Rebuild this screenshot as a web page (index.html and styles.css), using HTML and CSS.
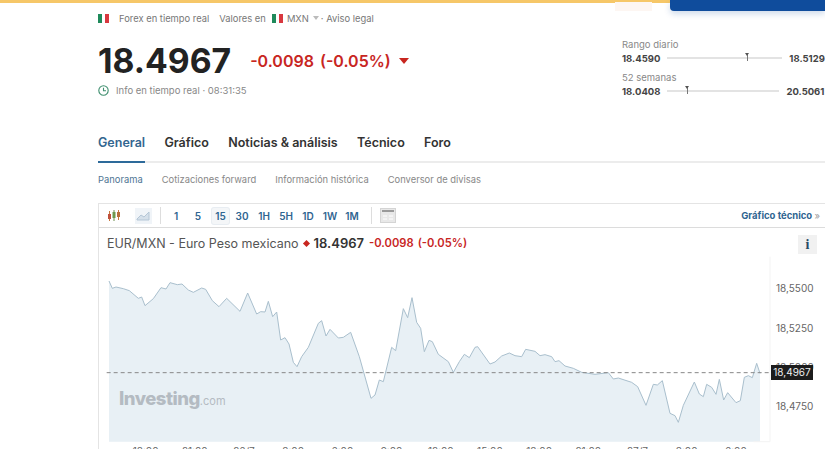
FILE: index.html
```html
<!DOCTYPE html>
<html lang="es">
<head>
    <meta charset="UTF-8">
    <meta name="viewport" content="width=device-width, initial-scale=1.0">
    <title>EUR/MXN</title>
    <link rel="stylesheet" href="styles.css">
</head>
<body>
    <div class="top-strip">
        <div class="promo-pale"></div>
        <div class="promo-blue"></div>
    </div>

    <div class="page">
        <div class="meta-row">
            <span class="flag"><i></i><i></i><i></i></span>
            <span class="meta-first">Forex en tiempo real</span>
            <span>Valores en</span>
            <span class="flag flag-second"><i></i><i></i><i></i></span>
            <span>MXN</span>
            <span class="caret-grey"></span>
            <span>· Aviso legal</span>
        </div>

        <div class="quote-row">
            <div class="quote-main">
                <div class="price-line">
                    <span class="price">18.4967</span>
                    <span class="change">-0.0098</span>
                    <span class="change">(-0.05%)</span>
                    <span class="caret-red"></span>
                </div>
                <div class="live-line">
                    <svg width="11" height="11" viewBox="0 0 11 11" fill="none" stroke="#3f8f6f" stroke-width="1.1">
                        <circle cx="5.5" cy="5.5" r="4.7"/>
                        <path d="M5.5 2.8V5.8H8"/>
                    </svg>
                    <span>Info en tiempo real · 08:31:35</span>
                </div>
            </div>
            <div class="ranges">
                <div class="range-label">Rango diario</div>
                <div class="range-line">
                    <b>18.4590</b>
                    <span class="track"><em class="marker marker-day"></em></span>
                    <b>18.5129</b>
                </div>
                <div class="range-label">52 semanas</div>
                <div class="range-line">
                    <b>18.0408</b>
                    <span class="track track-year"><em class="marker marker-year"></em></span>
                    <b>20.5061</b>
                </div>
            </div>
        </div>

        <div class="tabs">
            <a class="tab active">General</a>
            <a class="tab">Gráfico</a>
            <a class="tab">Noticias &amp; análisis</a>
            <a class="tab">Técnico</a>
            <a class="tab">Foro</a>
        </div>

        <div class="subtabs">
            <a class="active">Panorama</a>
            <a>Cotizaciones forward</a>
            <a>Información histórica</a>
            <a>Conversor de divisas</a>
        </div>

        <div class="chart-box">
            <div class="toolbar">
                <svg class="tool-candles" width="14" height="14" viewBox="0 0 14 14">
                    <path d="M2.5 2V12" stroke="#c9793f"/><rect x="1" y="5" width="3" height="5" fill="#c0503c"/>
                    <path d="M7 1V12" stroke="#6f8f4f"/><rect x="5.5" y="3" width="3" height="6" fill="#6f9a4f"/>
                    <path d="M11.5 1V11" stroke="#c9793f"/><rect x="10" y="3" width="3" height="5" fill="#b8703c"/>
                </svg>
                <span class="tool-area">
                    <svg width="15" height="11" viewBox="0 0 15 11">
                        <path d="M1 9L5 5L8 7L13 2V10H1Z" fill="#d5e0ea" stroke="#b4c6d6"/>
                    </svg>
                </span>
                <span class="tool-sep"></span>
                <div class="periods">
                    <span>1</span>
                    <span>5</span>
                    <span class="current">15</span>
                    <span>30</span>
                    <span>1H</span>
                    <span>5H</span>
                    <span>1D</span>
                    <span>1W</span>
                    <span>1M</span>
                </div>
                <span class="tool-sep tool-sep-right"></span>
                <span class="tool-calendar">
                    <svg width="16" height="15" viewBox="0 0 16 15">
                        <rect x="0.5" y="0.5" width="15" height="14" fill="#e8e8e8" stroke="#d4d4d4"/>
                        <rect x="2" y="2" width="12" height="2" fill="#9a9a9a"/>
                        <path d="M3 8H7M9 8H13M3 11H7M9 11H13" stroke="#fff"/>
                    </svg>
                </span>
                <a class="tool-link">Gráfico técnico <span>»</span></a>
            </div>

            <div class="legend">
                <span class="legend-name">EUR/MXN - Euro Peso mexicano</span>
                <span class="legend-diamond"></span>
                <b class="legend-price">18.4967</b>
                <b class="legend-change">-0.0098</b>
                <b class="legend-change">(-0.05%)</b>
            </div>
            <span class="info-btn">i</span>

            <div class="plot">
                <svg class="plot-svg" width="726" height="222" viewBox="27 -102 2178 666">
                    <path class="plot-area" d="M57 63L67 85 78 81 100 86 118 92 145 115 155 111 165 137 190 116 213 83 228 87 240 68 262 74 276 72 295 90 310 97 335 84 347 88 367 122 387 140 410 115 450 154 473 99 500 162 512 155 525 156 535 124 548 170 560 156 572 240 585 233 597 252 610 307 621 320 635 290 655 262 685 190 695 182 708 228 720 208 745 234 760 232 782 217 808 290 843 415 855 405 868 360 880 365 905 262 917 272 940 146 953 173 966 113 980 187 992 205 1003 275 1017 241 1027 245 1045 283 1075 305 1090 337 1108 305 1123 283 1138 293 1155 262 1163 260 1200 312 1215 306 1235 288 1258 279 1275 287 1295 290 1307 268 1335 274 1350 287 1365 284 1385 290 1395 305 1407 302 1425 318 1450 325 1475 337 1515 343 1555 338 1570 357 1585 354 1625 367 1643 380 1668 436 1690 373 1702 375 1717 362 1740 460 1755 467 1765 487 1780 436 1813 366 1828 402 1840 410 1850 373 1865 382 1878 403 1888 358 1901 420 1913 398 1938 428 1951 422 1963 352 1975 347 1987 353 2000 310 2010 340V545H57Z"/>
                    <path class="plot-line" d="M57 63L67 85 78 81 100 86 118 92 145 115 155 111 165 137 190 116 213 83 228 87 240 68 262 74 276 72 295 90 310 97 335 84 347 88 367 122 387 140 410 115 450 154 473 99 500 162 512 155 525 156 535 124 548 170 560 156 572 240 585 233 597 252 610 307 621 320 635 290 655 262 685 190 695 182 708 228 720 208 745 234 760 232 782 217 808 290 843 415 855 405 868 360 880 365 905 262 917 272 940 146 953 173 966 113 980 187 992 205 1003 275 1017 241 1027 245 1045 283 1075 305 1090 337 1108 305 1123 283 1138 293 1155 262 1163 260 1200 312 1215 306 1235 288 1258 279 1275 287 1295 290 1307 268 1335 274 1350 287 1365 284 1385 290 1395 305 1407 302 1425 318 1450 325 1475 337 1515 343 1555 338 1570 357 1585 354 1625 367 1643 380 1668 436 1690 373 1702 375 1717 362 1740 460 1755 467 1765 487 1780 436 1813 366 1828 402 1840 410 1850 373 1865 382 1878 403 1888 358 1901 420 1913 398 1938 428 1951 422 1963 352 1975 347 1987 353 2000 310 2010 340"/>
                    <path class="plot-edge" d="M2040 -10V545H1990"/>
                    <path class="plot-dash" d="M50 338H2040"/>
                </svg>

                <span class="watermark">Investing<small>.com</small></span>

                <span class="axis-y y-550">18,5500</span>
                <span class="axis-y y-525">18,5250</span>
                <span class="axis-y y-500">18,5000</span>
                <span class="axis-y y-475">18,4750</span>
                <span class="axis-tag">18,4967</span>

                <div class="axis-x">
                    <span>18:00</span>
                    <span>21:00</span>
                    <span>26/7</span>
                    <span>3:00</span>
                    <span>6:00</span>
                    <span>9:00</span>
                    <span>12:00</span>
                    <span>15:00</span>
                    <span>18:00</span>
                    <span>21:00</span>
                    <span>27/7</span>
                    <span>3:00</span>
                    <span>6:00</span>
                </div>
            </div>
        </div>
    </div>
</body>
</html>
```

FILE: styles.css
```css
html, body {
    margin: 0;
    height: 449px;
    overflow: hidden;
    background: #fff;
}
body {
    font-family: Inter, "Liberation Sans", sans-serif;
    color: #333;
}
a {
    text-decoration: none;
}

/* top strip */
.top-strip {
    height: 3px;
    background: #f6c768;
    display: flex;
    justify-content: flex-end;
    align-items: flex-start;
    gap: 18px;
}
.promo-pale {
    width: 37px;
    height: 9px;
    margin-top: 2px;
    background: #fdf6f2;
}
.promo-blue {
    width: 155px;
    height: 11px;
    background: #0f4c9c;
    border-bottom-left-radius: 4px;
    box-shadow: 0 3px 6px rgba(15, 76, 156, 0.2);
}

.page {
    padding-left: 98px;
}

/* meta row */
.meta-row {
    display: flex;
    align-items: center;
    height: 12px;
    margin-top: 9px;
    font-size: 9.4px;
    color: #777;
}
.meta-row span:nth-child(3) {
    margin-left: 10px;
}
.meta-first {
    margin-left: 10px;
}
.flag {
    display: flex;
    width: 11px;
    height: 9px;
}
.flag i {
    flex: 1;
    background: #fff;
}
.flag i:first-child {
    background: #1f8a5b;
}
.flag i:last-child {
    background: #d8383f;
}
.flag-second {
    margin: 0 4px 0 6px;
}
.caret-grey {
    width: 0;
    height: 0;
    margin: 0 2px 0 4px;
    border: 3px solid transparent;
    border-top: 4px solid #bbb;
    border-bottom: 0;
}

/* quote */
.quote-row {
    display: flex;
    justify-content: space-between;
    margin-top: 15px;
}
.price-line {
    display: flex;
    align-items: center;
    height: 44px;
}
.price {
    font-size: 33.7px;
    font-weight: 700;
    color: #222;
    margin-right: 19px;
    line-height: 44px;
}
.change {
    font-size: 16px;
    font-weight: 600;
    color: #c8261f;
    margin-right: 6px;
}
.caret-red {
    width: 0;
    height: 0;
    margin-left: 2px;
    border: 5px solid transparent;
    border-top: 6px solid #c8261f;
    border-bottom: 0;
}
.live-line {
    display: flex;
    align-items: center;
    gap: 7px;
    margin-top: 2px;
    font-size: 9.5px;
    color: #888;
}

.ranges {
    width: 203px;
    flex: none;
    font-size: 9.5px;
    white-space: nowrap;
}
.range-label {
    color: #888;
    line-height: 12px;
}
.range-line {
    display: flex;
    align-items: center;
    gap: 7px;
    height: 14px;
    margin-bottom: 7px;
    color: #444;
}
.range-line b {
    font-weight: 700;
}
.track {
    position: relative;
    width: 115px;
    height: 2px;
    background: #e3e3e3;
}
.track-year {
    width: 112px;
}
.marker {
    position: absolute;
    top: -4px;
    width: 1px;
    height: 8px;
    background: #777;
}
.marker::before {
    content: "";
    position: absolute;
    left: -2px;
    top: 0;
    border: 2.5px solid transparent;
    border-top: 3px solid #555;
    border-bottom: 0;
}
.marker-day {
    left: 80px;
}
.marker-year {
    left: 20px;
}

/* tabs */
.tabs {
    display: flex;
    gap: 19.3px;
    height: 28px;
    margin-top: 28px;
    border-bottom: 2px solid #ececec;
    font-size: 12.5px;
    font-weight: 600;
    line-height: 20px;
}
.tab {
    color: #333;
    height: 28px;
}
.tab.active {
    color: #33668f;
    border-bottom: 2px solid #2d6a9a;
}
.subtabs {
    display: flex;
    gap: 19px;
    margin-top: 11px;
    font-size: 9.4px;
    line-height: 12px;
    color: #888;
}
.subtabs .active {
    color: #4f7694;
}

/* chart */
.chart-box {
    position: relative;
    margin-top: 17px;
    height: 260px;
    border-left: 1px solid #e4e4e4;
}
.toolbar {
    display: flex;
    align-items: center;
    height: 23px;
    padding-left: 8px;
    border-top: 1px solid #e4e4e4;
    border-bottom: 1px solid #dcdcdc;
}
.tool-area {
    display: flex;
    align-items: center;
    justify-content: center;
    width: 17px;
    height: 16px;
    margin-left: 14px;
    background: #f0f4f8;
}
.tool-sep {
    width: 1px;
    height: 17px;
    margin-left: 8px;
    background: #ddd;
}
.periods {
    display: flex;
    align-items: center;
    margin-left: 4px;
    font-size: 10px;
    font-weight: 600;
    color: #2f6591;
}
.periods span {
    width: 22px;
    text-align: center;
    line-height: 16px;
}
.periods .current {
    width: 17px;
    margin: 0 2px 0 3px;
    background: #f4f6f8;
    border-radius: 2px;
    box-shadow: 0 0 0 1px #e8edf2;
}
.tool-sep-right {
    margin-left: 8px;
}
.tool-calendar {
    display: flex;
    margin-left: 8px;
}
.tool-link {
    margin-left: auto;
    margin-right: 5px;
    font-size: 9.5px;
    font-weight: 700;
    color: #2f6591;
}
.tool-link span {
    font-weight: 400;
    color: #999;
}
.legend {
    display: flex;
    align-items: center;
    height: 16px;
    margin-top: 7px;
    padding-left: 8px;
    white-space: nowrap;
}
.legend-name {
    font-size: 12.5px;
    color: #555;
}
.legend-diamond {
    width: 5px;
    height: 5px;
    margin: 0 5px 0 5px;
    background: #c8261f;
    transform: rotate(45deg);
}
.legend-price {
    font-size: 13px;
    font-weight: 600;
    color: #333;
    margin-right: 5px;
}
.legend-change {
    font-size: 11.2px;
    font-weight: 600;
    color: #c8261f;
    margin-right: 4px;
}
.info-btn {
    position: absolute;
    left: 699px;
    top: 32px;
    width: 19px;
    height: 19px;
    background: #f1f1f1;
    font-family: "Liberation Serif", serif;
    font-size: 14px;
    font-weight: 700;
    line-height: 19px;
    text-align: center;
    color: #2a4a66;
}

.plot {
    position: absolute;
    left: 0;
    top: 23px;
    width: 726px;
    height: 237px;
}
.plot-svg {
    display: block;
}
.plot-area {
    fill: #e8f0f5;
}
.plot-line {
    fill: none;
    stroke: #a9bfcd;
    stroke-width: 3;
}
.plot-edge {
    fill: none;
    stroke: #f3f3f3;
    stroke-width: 3;
}
.plot-dash {
    stroke: #888;
    stroke-width: 3;
    stroke-dasharray: 12 9;
}
.watermark {
    position: absolute;
    left: 20px;
    top: 161px;
    font-size: 18.5px;
    font-weight: 800;
    letter-spacing: -0.5px;
    color: #b4bbc2;
}
.watermark small {
    font-size: 11px;
    font-weight: 400;
    letter-spacing: 0;
}
.axis-y {
    position: absolute;
    left: 677px;
    font-size: 10px;
    line-height: 12px;
    color: #666;
}
.y-550 { top: 56px; }
.y-525 { top: 96px; }
.y-500 { top: 135px; }
.y-475 { top: 174px; }
.axis-tag {
    position: absolute;
    left: 672px;
    top: 139px;
    width: 42px;
    height: 15px;
    background: #1c1c1c;
    color: #eee;
    font-size: 10px;
    line-height: 15px;
    text-align: center;
}
.axis-x {
    position: absolute;
    left: 22px;
    top: 219px;
    display: flex;
    font-size: 10px;
    line-height: 12px;
    color: #666;
}
.axis-x span {
    width: 49.2px;
    text-align: center;
}
```
